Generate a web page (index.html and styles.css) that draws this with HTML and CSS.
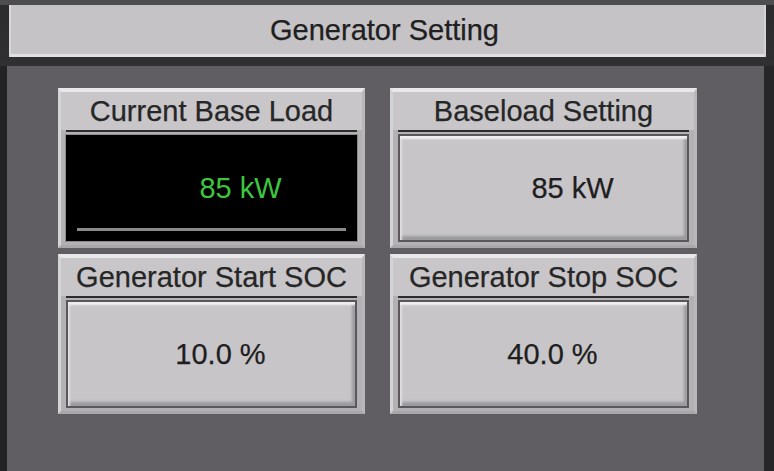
FILE: index.html
```html
<!DOCTYPE html>
<html lang="en">
<head>
    <meta charset="UTF-8">
    <meta name="viewport" content="width=device-width, initial-scale=1.0">
    <title>Generator Setting</title>
    <link rel="stylesheet" href="styles.css">
</head>
<body>
    <div class="screen">
        <div class="title-frame">
            <div class="title-bar">Generator Setting</div>
        </div>

        <div class="panel">
            <!-- read-only value -->
            <div class="tag-card">
                <div class="tag-label">Current Base Load</div>
                <div class="tag-rule"></div>
                <div class="readout">
                    <span class="readout-value unit-kw">85 kW</span>
                    <span class="readout-bar"></span>
                </div>
            </div>

            <!-- editable setpoints -->
            <div class="tag-card">
                <div class="tag-label">Baseload Setting</div>
                <div class="tag-rule"></div>
                <button class="setpoint unit-kw">85 kW</button>
            </div>

            <div class="tag-card">
                <div class="tag-label">Generator Start SOC</div>
                <div class="tag-rule"></div>
                <button class="setpoint unit-pct">10.0 %</button>
            </div>

            <div class="tag-card">
                <div class="tag-label">Generator Stop SOC</div>
                <div class="tag-rule"></div>
                <button class="setpoint unit-pct">40.0 %</button>
            </div>
        </div>
    </div>
</body>
</html>
```

FILE: styles.css
```css
* {
    margin: 0;
    padding: 0;
    box-sizing: border-box;
}

body {
    font-family: 'Liberation Sans', Arial, sans-serif;
    background: #29282a;
    color: #1e1e1e;
    width: 774px;
    height: 471px;
    overflow: hidden;
}

.screen {
    height: 471px;
    display: flex;
    flex-direction: column;
}

.title-frame {
    border-top: 5px solid #4d4c4e;
    padding: 0 8px 9px 9px;
    background: linear-gradient(#2b2a2c, #302f31);
}

.title-bar {
    height: 52px;
    background: #c5c3c6;
    display: flex;
    align-items: center;
    justify-content: center;
    font-size: 29px;
    color: #202020;
    -webkit-text-stroke: 0.25px #202020;
    padding: 0 6px 2px 0;
    box-shadow: inset 2px 0 0 #d7d6d8, inset -2px 0 0 #d3d2d4, inset 0 -3px 0 #e0dfe2;
}

.panel {
    flex: 1;
    background: #605e62;
    border-left: 7px solid #232224;
    border-right: 10px solid #262527;
    padding: 22px 0 0 51px;
    display: grid;
    grid-template-columns: 307px 307px;
    grid-auto-rows: 160px;
    gap: 6px 25px;
    align-content: start;
}

/* bevelled tag frame */
.tag-card {
    display: flex;
    flex-direction: column;
    background: linear-gradient(#c8c6c9 0 38px, #b3b1b4 38px);
    border-top: 4px solid #e8e7e9;
    border-left: 3px solid #d4d3d5;
    border-right: 3px solid #b9b7ba;
    border-bottom: 3px solid #a9a7aa;
    padding: 0 4px 3px;
}

.tag-label {
    height: 38px;
    display: flex;
    align-items: center;
    justify-content: center;
    font-size: 29px;
    color: #262626;
    -webkit-text-stroke: 0.25px #262626;
    white-space: nowrap;
    padding-top: 1px;
}

.tag-rule {
    height: 2px;
    margin: 0 1px 2px;
    background: #2c2b2d;
}

.readout {
    flex: 1;
    background: #000;
    border: 1px solid #8b898c;
    display: flex;
    flex-direction: column;
    padding-top: 13px;
}

.readout-value {
    flex: 1;
    display: flex;
    align-items: center;
    justify-content: center;
    font-size: 29px;
    color: #3cc63f;
}

.readout-bar {
    height: 3px;
    margin: 0 11px 10px 11px;
    background: #8c8a8d;
}

.setpoint {
    flex: 1;
    margin: 0 1px;
    font-family: inherit;
    font-size: 29px;
    color: #1e1e1e;
    -webkit-text-stroke: 0.25px #1e1e1e;
    background: #c7c5c8;
    border: 2px solid #59575b;
    box-shadow: inset 0 4px 2px -1px #efeef0, inset 3px 0 2px -1px #dfdee0,
                inset -4px 0 3px -1px #9a989b, inset 0 -5px 3px -1px #9a989b;
    display: flex;
    align-items: center;
    justify-content: center;
    cursor: pointer;
}

/* values sit right of centre, like the panel's fixed-width fields */
.unit-kw {
    padding-left: 58px;
}

.unit-pct {
    padding-left: 18px;
}
```
